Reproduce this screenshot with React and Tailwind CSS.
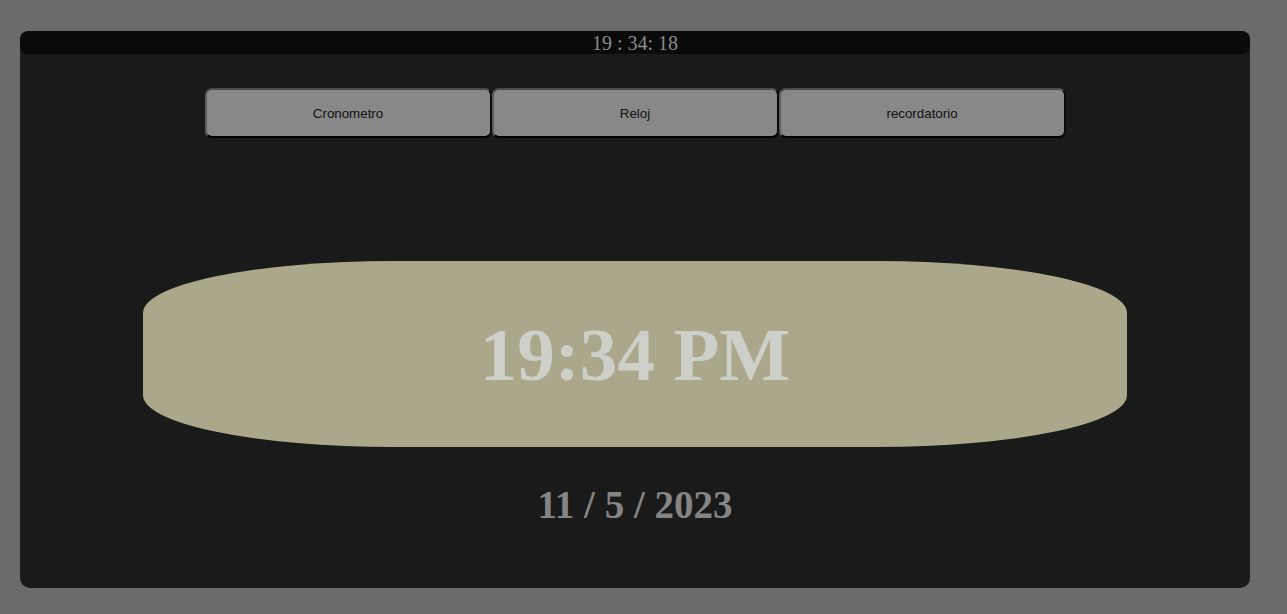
export default function App() {
  const tabs = ["Cronometro", "Reloj", "recordatorio"];

  return (
    <div className="min-h-[614px] bg-[#6b6b6b] pt-[31px] pl-[20px]">
      <div className="w-[1230px] h-[557px] bg-[#1a1a1a] rounded-[10px] flex flex-col items-center">
        <div
          className="w-full h-[23px] bg-[#0a0a0a] rounded-[8px] flex items-center justify-center text-[20px] leading-none text-[#8a8a8a]"
          style={{ fontFamily: '"Liberation Serif", serif' }}
        >
          19 : 34: 18
        </div>

        <div className="mt-[34px] flex">
          {tabs.map((t) => (
            <button
              key={t}
              className="w-[287px] h-[50px] pt-[2px] bg-[#888888] rounded-[7px] border-2 border-t-[#4c4c4c] border-l-[#5e5e5e] border-r-[#0a0a0a] border-b-[#000000] text-[13.33px] text-[#111]"
              style={{ fontFamily: '"Liberation Sans", Arial, sans-serif' }}
            >
              {t}
            </button>
          ))}
        </div>

        <div
          className="mt-[123px] w-[984px] h-[186px] bg-[#aaa78a] rounded-[250px/52px] flex items-center justify-center"
          style={{ fontFamily: '"Liberation Serif", serif' }}
        >
          <span className="text-[75px] font-bold leading-none text-[#cfcfca]">19:34 PM</span>
        </div>

        <div
          className="mt-[38px] text-[39px] font-bold leading-none text-[#858585]"
          style={{ fontFamily: '"Liberation Serif", serif' }}
        >
          11 / 5 / 2023
        </div>
      </div>
    </div>
  );
}
